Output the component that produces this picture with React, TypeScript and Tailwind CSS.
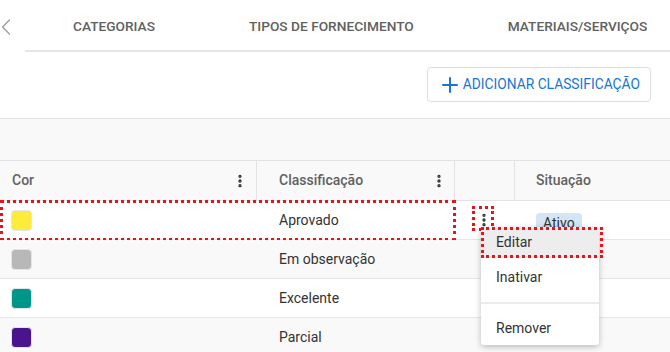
import { ChevronLeft, Plus, EllipsisVertical } from 'lucide-react'

const rows = [
  { color: 'bg-[#ffeb3b]', label: 'Aprovado', bg: 'bg-white' },
  { color: 'bg-[#b8b8b8]', label: 'Em observação', bg: 'bg-[#f9f9f9]' },
  { color: 'bg-[#009688]', label: 'Excelente', bg: 'bg-white' },
  { color: 'bg-[#4a148c]', label: 'Parcial', bg: 'bg-[#f9f9f9]' },
]

export default function App() {
  return (
    <div className="relative w-[670px] h-[352px] overflow-hidden bg-white font-['Roboto',sans-serif] text-[#333]">
      {/* Tabs */}
      <div className="flex h-[52px]">
        <div className="w-[25px] shrink-0 flex items-center justify-start pt-[2px] text-[#9e9e9e]">
          <ChevronLeft size={28} strokeWidth={1.2} className="-ml-[8px]" />
        </div>
        <div className="flex-1 flex items-center pt-[3px] border-b-2 border-[#e6e6e6] text-[13.7px] font-medium text-[#616161] whitespace-nowrap">
          <div className="shrink-0 pl-[48px] pr-[47px]">CATEGORIAS</div>
          <div className="shrink-0 px-[47px]">TIPOS DE FORNECIMENTO</div>
          <div className="shrink-0 px-[47px]">MATERIAIS/SERVIÇOS</div>
        </div>
      </div>

      {/* Action */}
      <div className="flex justify-end items-center h-[67px] pr-[19px] border-b border-[#e3e3e3]">
        <button className="flex items-center h-[35px] pl-[10px] pr-[10px] mb-[1px] border border-[#dedede] rounded-[4px] text-[#1976d2] text-[13.8px] whitespace-nowrap">
          <Plus size={24} strokeWidth={2} />
          <span className="ml-[1px]">ADICIONAR CLASSIFICAÇÃO</span>
        </button>
      </div>

      {/* Band */}
      <div className="h-[42px] bg-[#f9f9f9] border-b border-[#e3e3e3]" />

      {/* Header */}
      <div className="flex h-[40px] bg-[#f9f9f9] border-b border-[#e3e3e3] text-[14px] font-medium text-[#616161]">
        <div className="w-[257px] flex items-center justify-between pl-[12px] pr-[8px] border-r border-[#e3e3e3]">
          <span>Cor</span>
          <EllipsisVertical size={16} strokeWidth={3} className="text-[#333]" />
        </div>
        <div className="w-[198px] flex items-center justify-between pl-[22px] pr-[7px] border-r border-[#e3e3e3]">
          <span>Classificação</span>
          <EllipsisVertical size={16} strokeWidth={3} className="text-[#333]" />
        </div>
        <div className="w-[60px] border-r border-[#e3e3e3]" />
        <div className="flex-1 flex items-center pl-[21px]">Situação</div>
      </div>

      {/* Rows */}
      {rows.map((r, i) => (
        <div key={r.label} className={`relative flex h-[39px] border-b border-[#e6e6e6] text-[14px] ${r.bg}`}>
          <div className="w-[257px] flex items-center pl-[11px]">
            <div className={`w-[21px] h-[21px] rounded-[4px] border border-[#dfe6ee] ${r.color}`} />
          </div>
          <div className="w-[198px] flex items-center pl-[22px] pt-[1px]">{r.label}</div>
          <div className="w-[60px] flex items-center pl-[21px]">
            {i === 0 && <EllipsisVertical size={16} strokeWidth={3} className="text-[#333]" />}
          </div>
          <div className="flex-1 flex items-center pl-[21px]">
            {i === 0 && (
              <span className="px-[7px] h-[20px] leading-[20px] rounded-[4px] bg-[#d4e5f5] text-[#333] mt-[6px]">Ativo</span>
            )}
          </div>
          {i === 0 && (
            <>
              <div className="absolute left-0 top-[-1px] w-[456px] h-[41px] border-[3px] border-dotted border-[#e8141c]" />
              <div className="absolute left-[472px] top-[5px] w-[22px] h-[25px] border-[3px] border-dotted border-[#e8141c]" />
            </>
          )}
        </div>
      ))}

      {/* Context menu */}
      <div className="absolute left-[481px] top-[227px] w-[118px] bg-white rounded-[3px] shadow-[0_2px_6px_rgba(0,0,0,0.25)] text-[14px] text-[#333]">
        <div className="relative h-[31px] flex items-center pl-[15px] bg-[#ededed]">
          Editar
          <div className="absolute left-0 top-0 w-[122px] h-[31px] border-[3px] border-dotted border-[#e8141c]" />
        </div>
        <div className="h-[44px] flex items-center pl-[15px] pb-[6px]">Inativar</div>
        <div className="h-[2px] bg-[#ececec]" />
        <div className="h-[41px] flex items-center pl-[15px] pt-[7px]">Remover</div>
      </div>
    </div>
  )
}
